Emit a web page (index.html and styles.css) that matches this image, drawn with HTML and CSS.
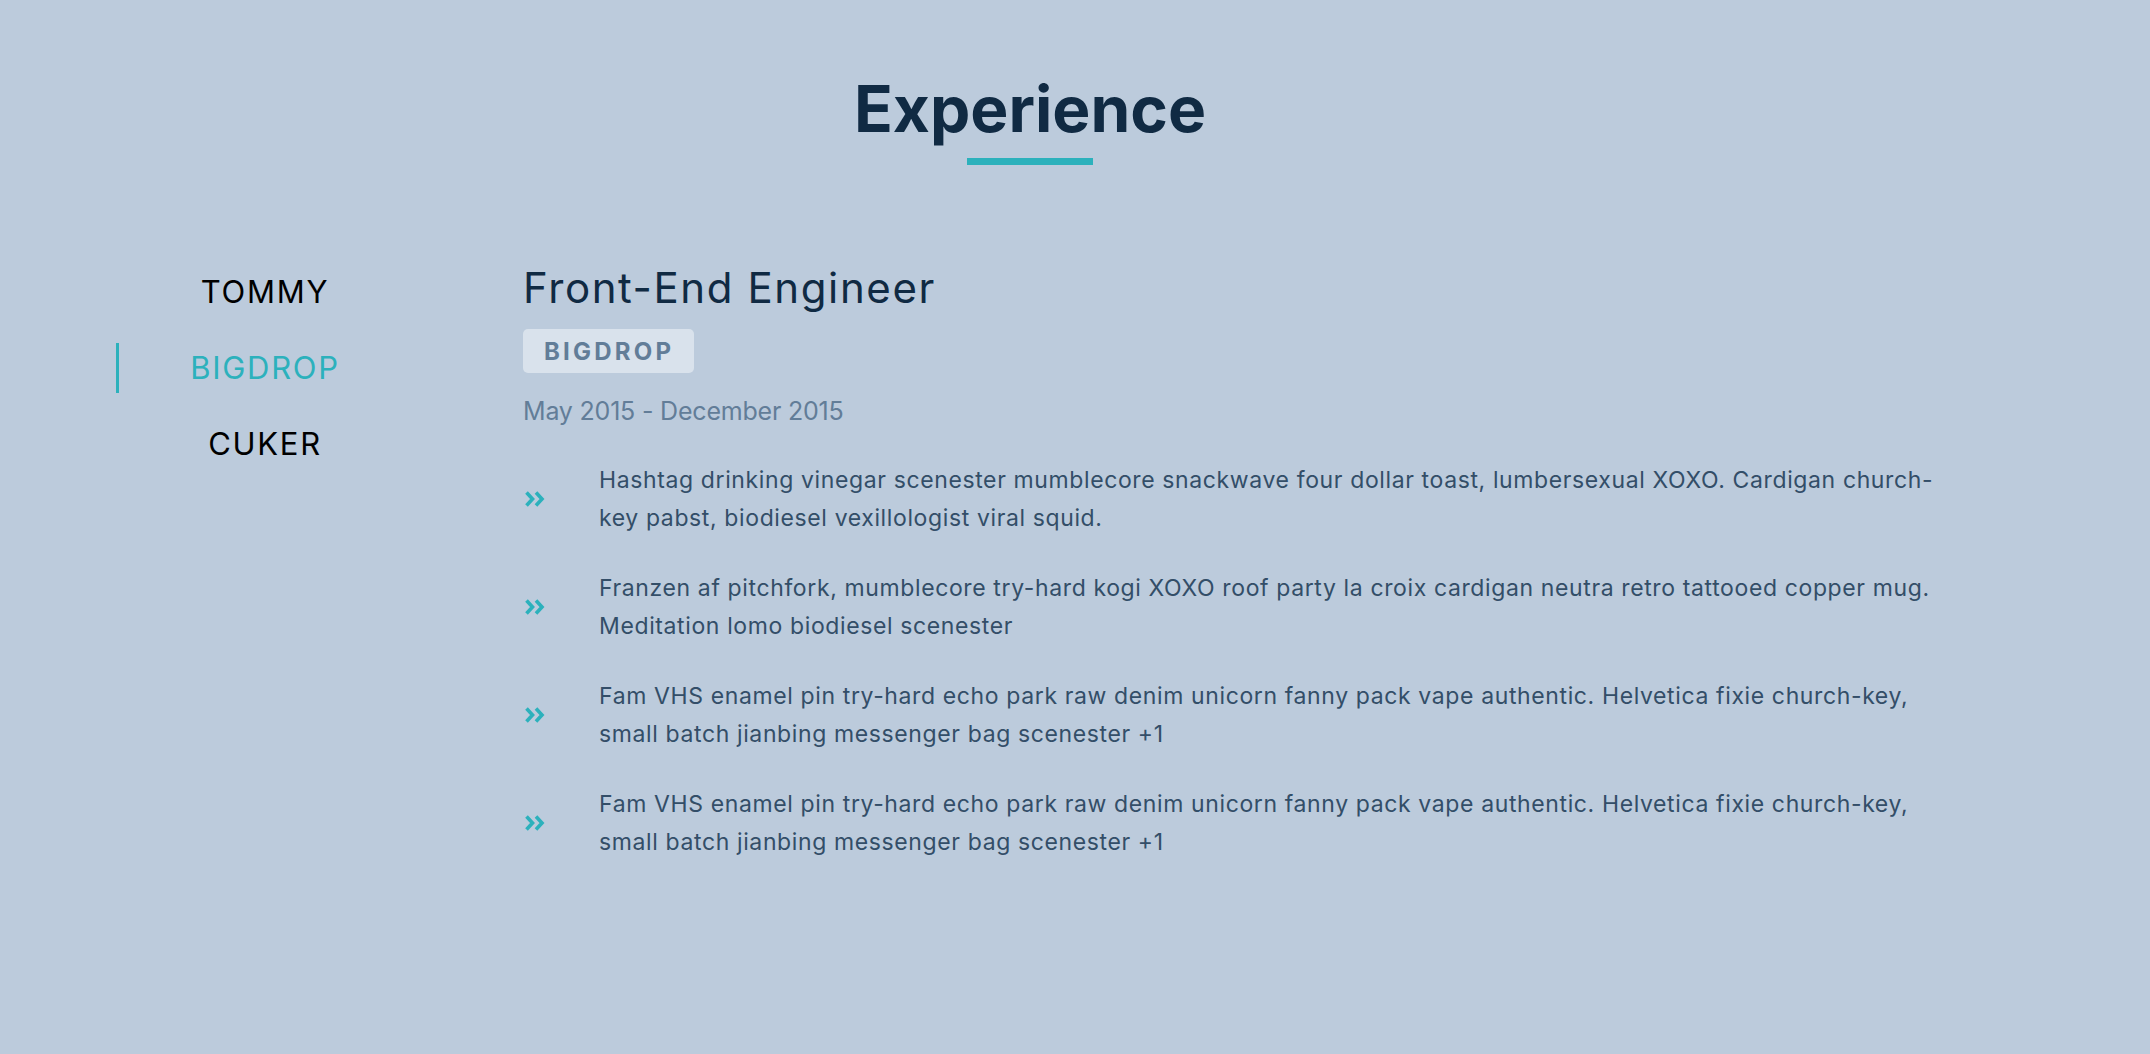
FILE: index.html
```html
<!DOCTYPE html>
<html lang="en">
<head>
<meta charset="utf-8">
<title>Experience</title>
<link rel="stylesheet" href="styles.css">
</head>
<body>
<section class="experience">
  <header class="heading">
    <h2 class="heading-title">Experience</h2>
    <span class="heading-rule"></span>
  </header>
  <div class="jobs">
    <nav class="tabs">
      <button class="tab">TOMMY</button>
      <button class="tab tab-active">BIGDROP</button>
      <button class="tab">CUKER</button>
    </nav>
    <article class="job">
      <h3 class="job-title">Front-End Engineer</h3>
      <span class="job-company">BIGDROP</span>
      <p class="job-dates">May 2015 - December 2015</p>
      <ul class="duties">
        <li class="duty">
          <svg class="duty-icon" viewBox="0 0 20 16" width="20" height="16"><polyline points="1.5,1.5 7.5,8 1.5,14.5"/><polyline points="11,1.5 17,8 11,14.5"/></svg>
          <span class="duty-text">Hashtag drinking vinegar scenester mumblecore snackwave four dollar toast, lumbersexual XOXO. Cardigan church-key pabst, biodiesel vexillologist viral squid.</span>
        </li>
        <li class="duty">
          <svg class="duty-icon" viewBox="0 0 20 16" width="20" height="16"><polyline points="1.5,1.5 7.5,8 1.5,14.5"/><polyline points="11,1.5 17,8 11,14.5"/></svg>
          <span class="duty-text">Franzen af pitchfork, mumblecore try-hard kogi XOXO roof party la croix cardigan neutra retro tattooed copper mug. Meditation lomo biodiesel scenester</span>
        </li>
        <li class="duty">
          <svg class="duty-icon" viewBox="0 0 20 16" width="20" height="16"><polyline points="1.5,1.5 7.5,8 1.5,14.5"/><polyline points="11,1.5 17,8 11,14.5"/></svg>
          <span class="duty-text">Fam VHS enamel pin try-hard echo park raw denim unicorn fanny pack vape authentic. Helvetica fixie church-key, small batch jianbing messenger bag scenester +1</span>
        </li>
        <li class="duty">
          <svg class="duty-icon" viewBox="0 0 20 16" width="20" height="16"><polyline points="1.5,1.5 7.5,8 1.5,14.5"/><polyline points="11,1.5 17,8 11,14.5"/></svg>
          <span class="duty-text">Fam VHS enamel pin try-hard echo park raw denim unicorn fanny pack vape authentic. Helvetica fixie church-key, small batch jianbing messenger bag scenester +1</span>
        </li>
      </ul>
    </article>
  </div>
</section>
</body>
</html>
```

FILE: styles.css
```css
* {
  box-sizing: border-box;
}

html,
body {
  margin: 0;
  padding: 0;
}

body {
  background: #bccbdc;
  font-family: Inter, "Noto Sans", "Liberation Sans", sans-serif;
  min-height: 1054px;
}

.experience {
  width: 1828px;
  margin-left: 116px;
  padding-top: 77px;
}

.heading {
  display: flex;
  flex-direction: column;
  align-items: center;
}

.heading-title {
  margin: 0;
  font-size: 64px;
  line-height: 63px;
  font-weight: 700;
  color: #102a43;
  letter-spacing: 0;
}

.heading-rule {
  display: block;
  width: 126px;
  height: 7px;
  margin-top: 18px;
  background: #2cb1bc;
}

.jobs {
  display: flex;
  margin-top: 102px;
  gap: 112px;
}

.tabs {
  display: flex;
  flex-direction: column;
  gap: 26px;
  width: 295px;
  flex: none;
}

.tab {
  height: 50px;
  border: 0;
  border-left: 3px solid transparent;
  background: none;
  padding: 0;
  font-family: inherit;
  font-size: 31px;
  line-height: 50px;
  letter-spacing: 1.7px;
  color: #000;
  text-align: center;
  cursor: pointer;
}

.tab-active {
  color: #2cb1bc;
  border-left-color: #2cb1bc;
}

.job {
  flex: 1;
  min-width: 0;
  display: flex;
  flex-direction: column;
  align-items: flex-start;
}

.job-title {
  margin: 0;
  font-size: 42px;
  line-height: 42px;
  font-weight: 400;
  color: #102a43;
  letter-spacing: 1.6px;
}

.job-company {
  margin-top: 20px;
  height: 44px;
  padding: 0 20px 0 21px;
  display: inline-flex;
  align-items: center;
  background: #d9e2ec;
  border-radius: 5px;
  font-size: 24px;
  font-weight: 700;
  letter-spacing: 3.2px;
  color: #627d98;
}

.job-dates {
  margin: 25px 0 0;
  font-size: 25px;
  line-height: 26px;
  letter-spacing: -0.2px;
  color: #627d98;
}

.duties {
  list-style: none;
  margin: 37px 0 0;
  padding: 0;
  display: flex;
  flex-direction: column;
  gap: 32px;
}

.duty {
  display: flex;
  align-items: center;
}

.duty-icon {
  flex: none;
  width: 20px;
  height: 16px;
  margin-left: 2px;
  margin-right: 54px;
  fill: none;
  stroke: #2cb1bc;
  stroke-width: 3.6;
}

.duty-text {
  font-size: 23px;
  line-height: 38px;
  letter-spacing: 0.62px;
  color: #334e68;
}
```
